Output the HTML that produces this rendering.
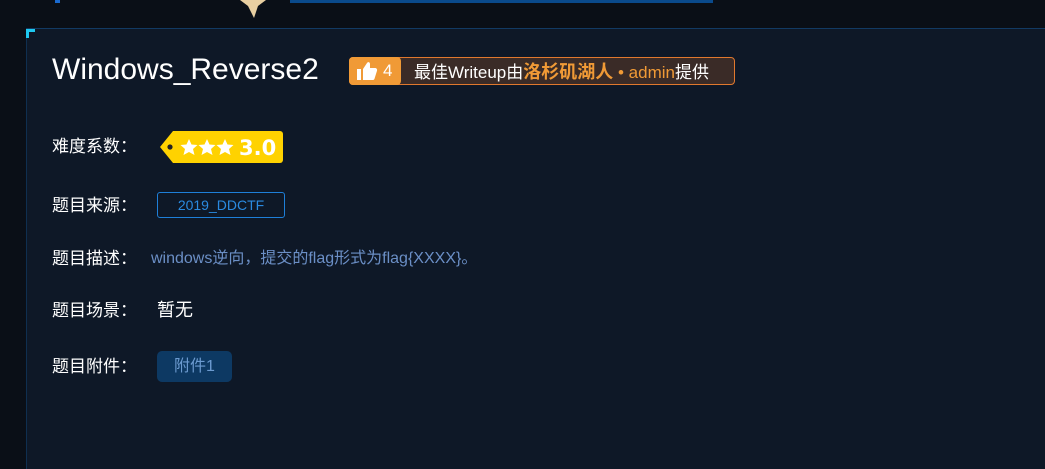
<!DOCTYPE html>
<html><head><meta charset="utf-8"><style>
*{margin:0;padding:0;box-sizing:border-box}
html,body{width:1045px;height:469px;overflow:hidden}
body{background:#0a0f17;font-family:"Liberation Sans","Noto Sans CJK SC",sans-serif;position:relative;color:#fff}
.a{position:absolute}
.panel{left:26px;top:28px;width:1030px;height:450px;background:#0e1827;border-top:1px solid #123a63;border-left:1px solid #0f2f50}
.lbl{position:absolute;left:52px;font-size:17px;color:#fff;line-height:20px}
</style></head><body>
<div class="a" style="left:290px;top:0;width:423px;height:3px;background:#0a4a8c"></div>
<div class="a" style="left:55px;top:0;width:5px;height:3px;background:#1a6ad0"></div>
<svg class="a" style="left:228px;top:0" width="60" height="20"><polygon points="12,0 20,6 26,18 30,6 38,0" fill="#e8cfa2"/></svg>
<div class="a panel"></div>
<div class="a" style="left:26px;top:29px;width:9px;height:3px;background:#1ec8f0"></div>
<div class="a" style="left:26px;top:29px;width:3px;height:9px;background:#1ec8f0"></div>
<div class="a" style="left:52px;top:52px;font-size:30px;line-height:36px;color:#fff">Windows_Reverse2</div>
<div class="a" style="left:349px;top:57px;width:386px;height:28px;border:1px solid #e0782e;border-radius:4px;background:#3a2b27"></div>
<div class="a" style="left:349px;top:57px;width:52px;height:28px;background:#f09a36;border-radius:4px"></div>
<svg class="a" style="left:356px;top:61px" width="22" height="20"><path d="M1 8h4v11H1z M7 8l4-6c1-1.5 3-1 3 1v4h5c1.5 0 2.5 1.3 2 2.7l-2.5 8c-.3 1-1 1.3-2 1.3H7z" fill="#fff"/></svg>
<div class="a" style="left:383px;top:60px;font-size:17px;line-height:22px;color:#fff">4</div>
<div class="a" style="left:414px;top:60px;font-size:17px;line-height:24px;color:#fff;white-space:nowrap">最佳Writeup由<b style="color:#f09a36;font-size:18px">洛杉矶湖人</b><span style="color:#f09a36"> • admin</span>提供</div>
<div class="lbl" style="top:137px">难度系数：</div>
<svg class="a" style="left:159px;top:130px" width="125" height="34"><path d="M14 1H121a3 3 0 0 1 3 3V30a3 3 0 0 1-3 3H14L1 17z" fill="#ffd200"/><circle cx="11" cy="17" r="2.6" fill="#222"/>
<g fill="#fff"><polygon points="30,9 32.5,14.5 38.5,15 34,19 35.5,25 30,22 24.5,25 26,19 21.5,15 27.5,14.5"/><polygon points="48,9 50.5,14.5 56.5,15 52,19 53.5,25 48,22 42.5,25 44,19 39.5,15 45.5,14.5"/><polygon points="66,9 68.5,14.5 74.5,15 70,19 71.5,25 66,22 60.5,25 62,19 57.5,15 63.5,14.5"/></g>
<text x="80" y="25" font-family="DejaVu Sans" font-weight="bold" font-size="21" fill="#fff">3.0</text></svg>
<div class="lbl" style="top:196px">题目来源：</div>
<div class="a" style="left:157px;top:192px;width:128px;height:26px;border:1px solid #1e7fd8;border-radius:3px;color:#2a8ae0;font-size:14px;text-align:center;line-height:24px">2019_DDCTF</div>
<div class="lbl" style="top:249px">题目描述：</div>
<div class="a" style="left:151px;top:249px;font-size:16px;line-height:20px;color:#6b8fc6;white-space:nowrap">windows逆向，提交的flag形式为flag{XXXX}。</div>
<div class="lbl" style="top:301px">题目场景：</div>
<div class="a" style="left:157px;top:299px;font-size:18px;line-height:22px;color:#fff">暂无</div>
<div class="lbl" style="top:357px">题目附件：</div>
<div class="a" style="left:157px;top:351px;width:75px;height:31px;background:#0d3963;border-radius:5px;color:#6c9bd0;font-size:16px;text-align:center;line-height:31px">附件1</div>
</body></html>
